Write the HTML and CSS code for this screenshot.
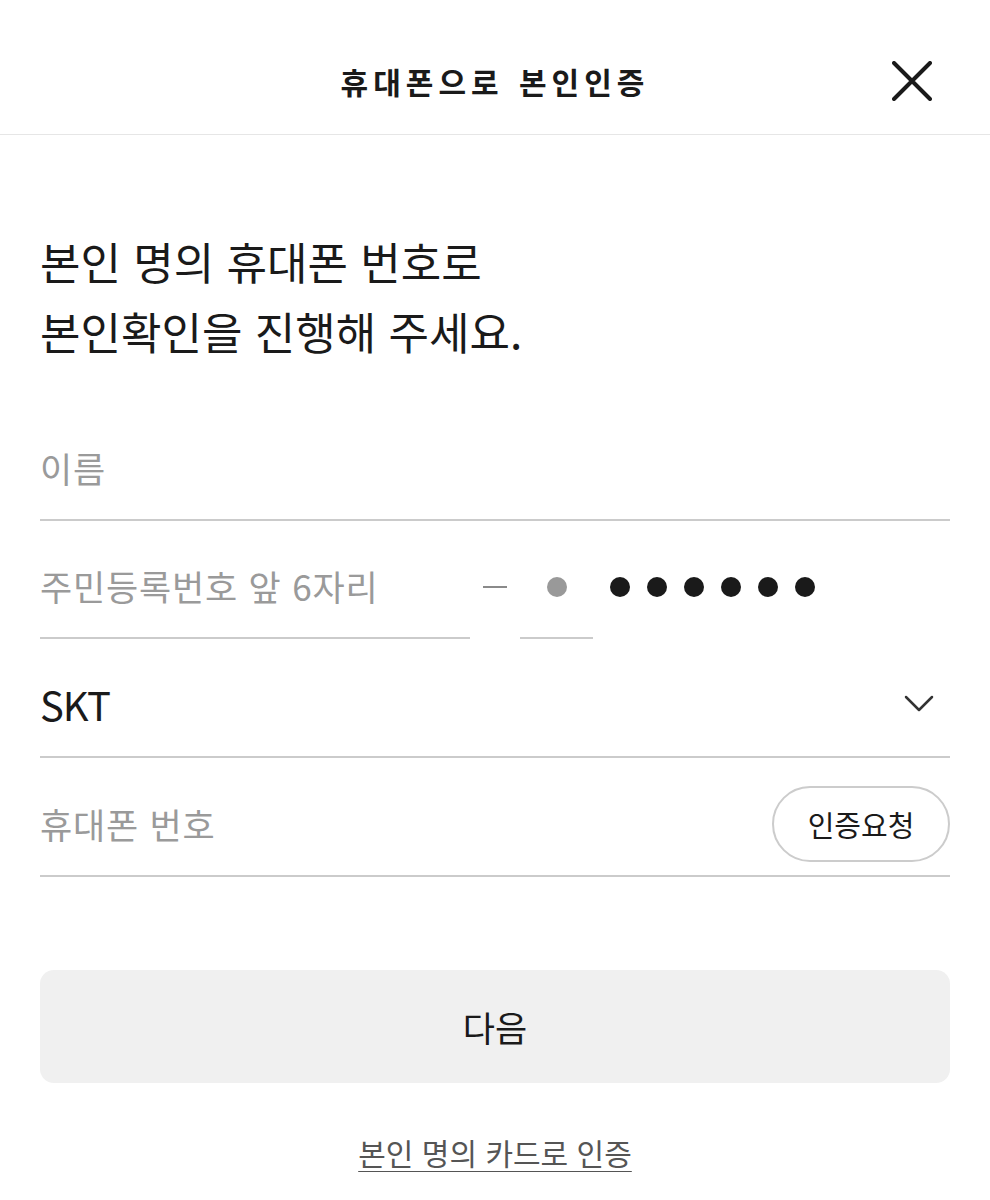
FILE: index.html
```html
<!DOCTYPE html>
<html lang="ko">
<head>
  <meta charset="UTF-8" />
  <meta name="viewport" content="width=device-width, initial-scale=1" />
  <title>휴대폰으로 본인인증</title>
  <link rel="stylesheet" href="styles.css">
</head>
<body>
  <header class="topbar">
    <span></span>
    <h1 class="topbar-title">휴대폰으로 본인인증</h1>
    <button class="close-btn" type="button" aria-label="닫기">
      <svg viewBox="0 0 40 40" width="40" height="40">
        <path d="M2 2 L38 38 M38 2 L2 38" stroke="#1a1a1a" stroke-width="4" stroke-linecap="round" fill="none"/>
      </svg>
    </button>
  </header>

  <main class="content">
    <h2 class="lead">본인 명의 휴대폰 번호로<br>본인확인을 진행해 주세요.</h2>

    <form id="authForm">
      <label class="field">
        <input type="text" name="name" placeholder="이름">
      </label>

      <div class="rrn">
        <label class="field rrn-front">
          <input type="text" name="birth" placeholder="주민등록번호 앞 6자리">
        </label>
        <div class="field rrn-sep"><span class="dash"></span></div>
        <div class="field rrn-back"><span class="dot dot-gray"></span></div>
        <div class="field rrn-mask">
          <span class="dot"></span><span class="dot"></span><span class="dot"></span>
          <span class="dot"></span><span class="dot"></span><span class="dot"></span>
        </div>
      </div>

      <div class="field field-select">
        <span class="carrier">SKT</span>
        <svg class="chevron" viewBox="0 0 30 18" width="30" height="18">
          <path d="M2 2 L15 15 L28 2" stroke="#333" stroke-width="2.5" fill="none" stroke-linecap="round" stroke-linejoin="round"/>
        </svg>
      </div>

      <label class="field">
        <input type="tel" name="phone" placeholder="휴대폰 번호">
        <button class="pill-btn" type="button">인증요청</button>
      </label>

      <button class="next-btn" type="submit">다음</button>
    </form>

    <a class="alt-link" href="#">본인 명의 카드로 인증</a>
  </main>
</body>
</html>
```

FILE: styles.css
```css
body {
  margin: 0;
  background: #fff;
  color: #1a1a1a;
  font-family: "Noto Sans CJK KR", "Noto Sans", sans-serif;
}
.topbar {
  height: 135px;
  box-sizing: border-box;
  padding-top: 27px;
  border-bottom: 1px solid #e6e6e6;
  display: grid;
  grid-template-columns: 1fr auto 1fr;
  align-items: center;
}
.topbar-title {
  margin: 0;
  font-size: 30px;
  font-weight: 700;
  letter-spacing: 5px;
  word-spacing: 2px;
  line-height: 40px;
}
.close-btn {
  justify-self: end;
  margin-right: 58px;
  width: 40px;
  height: 40px;
  padding: 0;
  border: none;
  background: none;
  display: flex;
}
.content {
  padding: 0 40px;
}
.lead {
  margin: 91px 0 37px;
  font-size: 44px;
  font-weight: 400;
  line-height: 70px;
}
.field {
  display: flex;
  align-items: center;
  height: 60px;
  padding: 34px 0 22px;
  border-bottom: 2px solid #cbcbcb;
}
.field input {
  flex: 1;
  min-width: 0;
  border: none;
  outline: none;
  padding: 0;
  font-family: inherit;
  font-size: 35px;
  letter-spacing: 0.8px;
  color: #1a1a1a;
  background: none;
}
.field input::placeholder {
  color: #9a9a9a;
}
.rrn {
  display: flex;
  margin-bottom: 1px;
}
.rrn-front {
  width: 430px;
}
.rrn-sep {
  width: 24px;
  margin: 0 13px;
  border-bottom-color: transparent;
}
.dash {
  display: block;
  width: 24px;
  height: 2px;
  background: #8a8a8a;
  margin-top: 4px;
}
.rrn-back {
  width: 73px;
  justify-content: center;
}
.rrn-mask {
  border-bottom-color: transparent;
  margin-left: 17px;
  gap: 17px;
}
.dot {
  width: 20px;
  height: 20px;
  border-radius: 50%;
  background: #1a1a1a;
  margin-top: 3px;
}
.dot-gray {
  background: #999;
}
.field-select {
  justify-content: space-between;
  margin-bottom: 1px;
}
.carrier {
  font-size: 40px;
  letter-spacing: -1px;
}
.chevron {
  margin-right: 16px;
}
.pill-btn {
  flex: none;
  width: 178px;
  height: 76px;
  border: 2px solid #cccccc;
  border-radius: 38px;
  background: #fff;
  font-family: inherit;
  font-size: 29px;
  color: #1a1a1a;
  margin-top: 2px;
}
.next-btn {
  display: block;
  width: 100%;
  height: 113px;
  margin-top: 93px;
  border: none;
  border-radius: 14px;
  background: #f0f0f0;
  font-family: inherit;
  font-size: 35px;
  color: #1a1a1a;
}
.alt-link {
  display: block;
  width: max-content;
  margin: 49px auto 0;
  font-size: 30px;
  line-height: 40px;
  color: #555;
  text-underline-offset: 6px;
}
```
